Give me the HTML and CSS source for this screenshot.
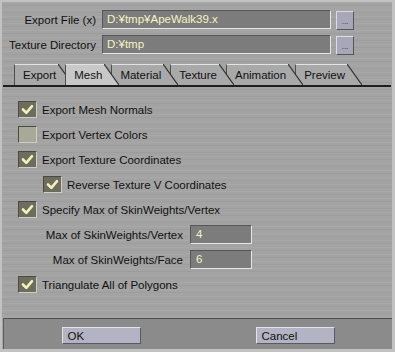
FILE: index.html
```html
<!DOCTYPE html>
<html lang="en">

<head>
    <meta charset="UTF-8">
    <title>X File Export</title>
    <link rel="stylesheet" href="styles.css">
</head>

<body>

    <div class="dialog">
        <div class="paths">
            <span class="path-label">Export File (x)</span>
            <div class="field">D:¥tmp¥ApeWalk39.x</div>
            <button class="browse">...</button>
            <span class="path-label">Texture Directory</span>
            <div class="field">D:¥tmp</div>
            <button class="browse">...</button>
        </div>

        <div class="tabs">
            <span class="tab">Export</span>
            <span class="tab active">Mesh</span>
            <span class="tab">Material</span>
            <span class="tab">Texture</span>
            <span class="tab">Animation</span>
            <span class="tab">Preview</span>
        </div>

        <div class="options">
            <div class="option">
                <span class="check on"><svg viewBox="0 0 16 15"><path d="M3.5 7.5 L6.8 10.8 L12.5 4.2" /></svg></span>
                Export Mesh Normals
            </div>
            <div class="option">
                <span class="check"></span>
                Export Vertex Colors
            </div>
            <div class="option">
                <span class="check on"><svg viewBox="0 0 16 15"><path d="M3.5 7.5 L6.8 10.8 L12.5 4.2" /></svg></span>
                Export Texture Coordinates
            </div>
            <div class="option sub">
                <span class="check on"><svg viewBox="0 0 16 15"><path d="M3.5 7.5 L6.8 10.8 L12.5 4.2" /></svg></span>
                Reverse Texture V Coordinates
            </div>
            <div class="option">
                <span class="check on"><svg viewBox="0 0 16 15"><path d="M3.5 7.5 L6.8 10.8 L12.5 4.2" /></svg></span>
                Specify Max of SkinWeights/Vertex
            </div>
            <div class="num-row">
                <span class="num-label">Max of SkinWeights/Vertex</span>
                <div class="num-field">4</div>
            </div>
            <div class="num-row">
                <span class="num-label">Max of SkinWeights/Face</span>
                <div class="num-field">6</div>
            </div>
            <div class="option">
                <span class="check on"><svg viewBox="0 0 16 15"><path d="M3.5 7.5 L6.8 10.8 L12.5 4.2" /></svg></span>
                Triangulate All of Polygons
            </div>
        </div>

        <div class="footer">
            <button class="action">OK</button>
            <button class="action">Cancel</button>
        </div>
    </div>

</body>

</html>
```

FILE: styles.css
```css
body {
    margin: 0;
    background-color: #bdbdbd;
    font-family: "Liberation Sans", Arial, sans-serif;
    font-size: 11.5px;
    color: #111;
}

.dialog {
    box-sizing: border-box;
    width: 395px;
    height: 352px;
    border: 2px solid #c2c2c2;
    border-bottom-width: 3px;
    border-right-width: 3px;
    background-color: #a3a3a3;
    background-image: repeating-linear-gradient(180deg,
            rgba(255, 255, 255, 0.05) 0 1px,
            transparent 1px 3px,
            rgba(0, 0, 0, 0.035) 3px 4px,
            transparent 4px 7px);
    display: flex;
    flex-direction: column;
}

/* file paths */
.paths {
    display: grid;
    grid-template-columns: 95px 229px 18px;
    grid-auto-rows: 19px;
    column-gap: 5px;
    row-gap: 6px;
    padding-top: 8px;
    align-items: center;
}

.path-label {
    text-align: right;
    white-space: nowrap;
    margin-right: 1px;
}

.field,
.num-field {
    box-sizing: border-box;
    height: 19px;
    line-height: 17px;
    padding-left: 4px;
    background-color: #7c7c7c;
    border: 1px solid;
    border-color: #565656 #e6e6e6 #e6e6e6 #565656;
    color: #f7f3c4;
    white-space: nowrap;
}

.browse {
    box-sizing: border-box;
    width: 18px;
    height: 19px;
    padding: 0;
    margin-top: 1px;
    background-color: #a7a7b7;
    border: 1px solid;
    border-color: #dcdce6 #55555f #55555f #dcdce6;
    font-family: "Liberation Sans", Arial, sans-serif;
    font-size: 8px;
    line-height: 10px;
    padding-top: 4px;
    color: #222;
}

/* tab strip */
.tabs {
    display: flex;
    height: 21px;
    margin: 10px 1px 0;
    padding-left: 11px;
    border-bottom: 2px solid #1e1e1e;
}

.tab {
    position: relative;
    height: 21px;
    line-height: 20px;
    padding: 0 2px 0 8px;
    margin-right: 7px;
    box-sizing: border-box;
    background-color: #a9a9a9;
    border-top: 1px solid #e2e2e2;
    border-left: 1px solid #4e4e4e;
    white-space: nowrap;
}

.tab::after {
    content: "";
    position: absolute;
    left: 100%;
    top: -1px;
    width: 15px;
    height: 21px;
    background: url("data:image/svg+xml,%3Csvg xmlns='http://www.w3.org/2000/svg' viewBox='0 0 15 21' preserveAspectRatio='none'%3E%3Cpolygon points='0,0 15,21 0,21' fill='%23a9a9a9'/%3E%3Cline x1='0' y1='0' x2='15' y2='21' stroke='%23333' stroke-width='1.2'/%3E%3C/svg%3E");
    z-index: 1;
}

.tab.active {
    background-color: #c8c8c8;
    z-index: 2;
}

.tab.active::after {
    background: url("data:image/svg+xml,%3Csvg xmlns='http://www.w3.org/2000/svg' viewBox='0 0 15 21' preserveAspectRatio='none'%3E%3Cpolygon points='0,0 15,21 0,21' fill='%23c8c8c8'/%3E%3Cline x1='0' y1='0' x2='15' y2='21' stroke='%23333' stroke-width='1.2'/%3E%3C/svg%3E");
}

/* options */
.options {
    flex: 1;
    padding: 10px 0 0 16px;
}

.option,
.num-row {
    display: flex;
    align-items: center;
    height: 25px;
    white-space: nowrap;
}

.option.sub {
    padding-left: 25px;
}

.check {
    box-sizing: border-box;
    width: 19px;
    height: 17px;
    margin-right: 5px;
    background-color: #a9a99a;
    border: 1px solid;
    border-color: #4a4a42 #cfcfc4 #cfcfc4 #4a4a42;
}

.check.on {
    background-color: #6d6d5e;
}

.check svg {
    display: block;
    width: 17px;
    height: 15px;
}

.check path {
    fill: none;
    stroke: #f3f1be;
    stroke-width: 2.6;
    stroke-linecap: round;
    stroke-linejoin: round;
}

.num-label {
    box-sizing: border-box;
    width: 172px;
    text-align: right;
    padding-right: 7px;
}

.num-field {
    width: 62px;
    height: 19px;
    padding-left: 5px;
}

/* bottom buttons */
.footer {
    display: grid;
    grid-template-columns: 1fr 1fr;
    justify-items: center;
    align-items: start;
    height: 31px;
    box-sizing: border-box;
    padding-top: 8px;
    margin: 0 0 0 1px;
    background-color: #8b8b8b;
    border-top: 1px solid #4e4e4e;
    border-left: 1px solid #5e5e5e;
}

.action {
    box-sizing: border-box;
    width: 79px;
    height: 17px;
    padding: 0 0 0 5px;
    text-align: left;
    background-color: #b3b3c3;
    border: 1px solid;
    border-color: #e2e2ea #585866 #585866 #e2e2ea;
    font-family: "Liberation Sans", Arial, sans-serif;
    font-size: 11.5px;
    color: #111;
}
```
